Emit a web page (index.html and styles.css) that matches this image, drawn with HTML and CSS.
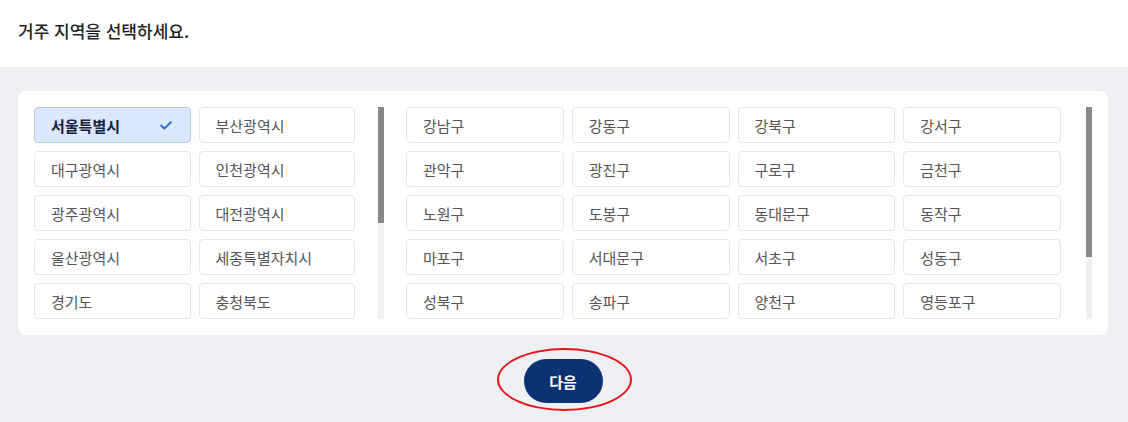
FILE: index.html
```html
<!DOCTYPE html>
<html lang="ko">

<head>
    <meta charset="UTF-8">
    <meta name="viewport" content="width=device-width, initial-scale=1.0">
    <title>거주 지역 선택</title>
    <link rel="stylesheet" href="styles.css">
</head>

<body>
    <div class="header">
        <h2>거주 지역을 선택하세요.</h2>
    </div>

    <div class="content">
        <div class="card">
            <div class="panel panel-city">
                <div class="list list-city">
                    <button class="item selected">
                        <span>서울특별시</span>
                        <svg class="check" width="12" height="9" viewBox="0 0 12 9">
                            <path d="M1.2 4.6 L4.4 7.6 L10.8 1.2" fill="none" stroke="#2d6bd0" stroke-width="2" stroke-linecap="round" stroke-linejoin="round" />
                        </svg>
                    </button>
                    <button class="item">부산광역시</button>
                    <button class="item">대구광역시</button>
                    <button class="item">인천광역시</button>
                    <button class="item">광주광역시</button>
                    <button class="item">대전광역시</button>
                    <button class="item">울산광역시</button>
                    <button class="item">세종특별자치시</button>
                    <button class="item">경기도</button>
                    <button class="item">충청북도</button>
                </div>
                <div class="scrollbar">
                    <div class="thumb thumb-city"></div>
                </div>
            </div>

            <div class="panel panel-district">
                <div class="list list-district">
                    <button class="item">강남구</button>
                    <button class="item">강동구</button>
                    <button class="item">강북구</button>
                    <button class="item">강서구</button>
                    <button class="item">관악구</button>
                    <button class="item">광진구</button>
                    <button class="item">구로구</button>
                    <button class="item">금천구</button>
                    <button class="item">노원구</button>
                    <button class="item">도봉구</button>
                    <button class="item">동대문구</button>
                    <button class="item">동작구</button>
                    <button class="item">마포구</button>
                    <button class="item">서대문구</button>
                    <button class="item">서초구</button>
                    <button class="item">성동구</button>
                    <button class="item">성북구</button>
                    <button class="item">송파구</button>
                    <button class="item">양천구</button>
                    <button class="item">영등포구</button>
                </div>
                <div class="scrollbar">
                    <div class="thumb thumb-district"></div>
                </div>
            </div>
        </div>

        <div class="actions">
            <button class="next">다음</button>
            <!-- red annotation circle -->
            <div class="mark"></div>
        </div>
    </div>
</body>

</html>
```

FILE: styles.css
```css
body {
    font-family: 'Noto Sans CJK KR', 'Noto Sans', sans-serif;
    margin: 0;
    background-color: #eff0f4;
    color: #222;
}

.header {
    height: 67px;
    box-sizing: border-box;
    padding: 19px 18px 0;
    background-color: #fff;
}

.header h2 {
    margin: 0;
    font-size: 17px;
    line-height: 24px;
    font-weight: 500;
    color: #1f1f1f;
}

.content {
    padding: 24px 20px 0 18px;
}

.card {
    display: flex;
    gap: 22px;
    padding: 16px;
    background-color: #fff;
    border-radius: 8px;
}

.panel {
    display: flex;
    height: 212px;
    overflow: hidden;
}

.panel-city {
    width: 350px;
}

.panel-district {
    flex: 1;
}

.list {
    flex: 1;
    display: grid;
    gap: 8px;
    align-content: start;
}

.list-city {
    grid-template-columns: repeat(2, 1fr);
    padding-right: 23px;
}

.list-district {
    grid-template-columns: repeat(4, 1fr);
    padding-right: 25px;
}

.item {
    display: flex;
    align-items: center;
    justify-content: space-between;
    height: 36px;
    padding: 0 18px 0 16px;
    background-color: #fff;
    border: 1px solid #e5e6e9;
    border-radius: 4px;
    font-family: inherit;
    font-size: 15px;
    color: #555;
    text-align: left;
    cursor: pointer;
}

.item.selected {
    background-color: #dce7fc;
    border-color: #b7c8e6;
    color: #16213d;
    font-weight: 600;
}

.scrollbar {
    width: 6px;
    background-color: #f1f1f1;
}

.thumb {
    background-color: #888;
}

.thumb-city {
    height: 116px;
}

.thumb-district {
    height: 150px;
}

.actions {
    position: relative;
    display: flex;
    justify-content: center;
    padding: 24px 0 19px;
}

.next {
    width: 79px;
    height: 44px;
    border: none;
    border-radius: 22px;
    background-color: #0c3273;
    color: #fff;
    font-family: inherit;
    font-size: 15px;
    font-weight: 700;
    cursor: pointer;
}

.mark {
    position: absolute;
    left: 479px;
    top: 13px;
    width: 131px;
    height: 59px;
    border: 2px solid #e8141a;
    border-radius: 50%;
}
```
